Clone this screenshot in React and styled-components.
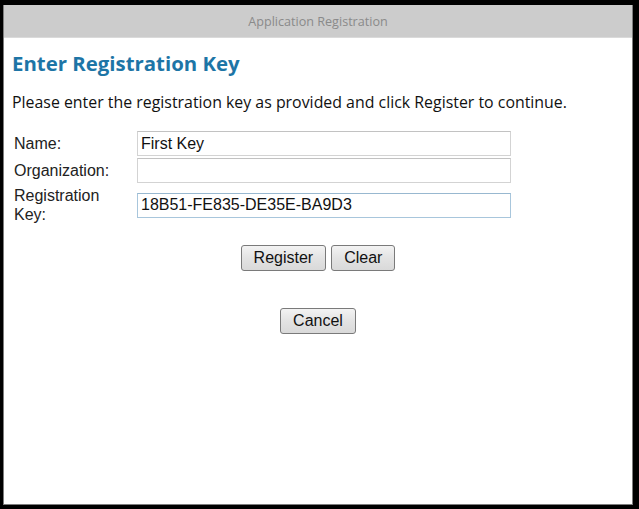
import React from "react";
import styled, { createGlobalStyle } from "styled-components";

const GlobalStyle = createGlobalStyle`
  html, body {
    margin: 0;
    padding: 0;
    background: #000;
  }
`;

const Screen = styled.div`
  width: 639px;
  height: 509px;
  box-sizing: border-box;
  padding: 5px 6px 4px 3px;
  background: #000;
`;

const Window = styled.div`
  width: 630px;
  height: 500px;
  box-sizing: border-box;
  border: 1px solid #7d7d7d;
  border-top: none;
  background: #fff;
  display: flex;
  flex-direction: column;
`;

const TitleBar = styled.div`
  height: 32px;
  background: #cccccc;
  border-bottom: 1px solid #dadada;
  display: flex;
  align-items: center;
  justify-content: center;
  font-family: "Open Sans", sans-serif;
  font-size: 12.6px;
  color: #8a8a8a;
`;

const Content = styled.div`
  padding: 11px 8px 0 8px;
`;

const Heading = styled.h1`
  margin: 0;
  font-family: "Open Sans", sans-serif;
  font-weight: 700;
  font-size: 20.4px;
  color: #1d75a6;
`;

const Intro = styled.p`
  margin: 14px 0 18px;
  font-family: "Open Sans", sans-serif;
  font-size: 15.9px;
  color: #111;
`;

const Form = styled.div`
  display: grid;
  grid-template-columns: 123px 374px;
  row-gap: 2px;
  align-items: center;
  margin-left: 2px;
  font-family: "Liberation Sans", Arial, sans-serif;
  font-size: 16px;
  color: #222;
`;

const Label = styled.label`
  max-width: 112px;
  padding: 1px 0;
  line-height: 19px;
`;

const Field = styled.input`
  box-sizing: border-box;
  width: 374px;
  height: 25px;
  padding: 0 3px;
  border: 1px solid ${(p) => (p.$focused ? "#a8c6dc" : "#d3d3d3")};
  border-top-color: ${(p) => (p.$focused ? "#98b8d0" : "#c2c2c2")};
  font-family: "Liberation Sans", Arial, sans-serif;
  font-size: 16px;
  color: #111;
  outline: none;
  background: #fff;
`;

const ButtonRow = styled.div`
  display: flex;
  justify-content: center;
  gap: 5px;
  margin-top: ${(p) => p.$top}px;
`;

const Button = styled.button`
  box-sizing: border-box;
  height: 26px;
  padding: 0 12px;
  border: 1px solid #7a7a7a;
  border-radius: 3px;
  background: linear-gradient(#f3f3f3, #e3e3e3 50%, #d9d9d9);
  font-family: "Liberation Sans", Arial, sans-serif;
  font-size: 16px;
  color: #111;
`;

export default function App() {
  return (
    <>
      <GlobalStyle />
      <Screen>
        <Window>
          <TitleBar>Application Registration</TitleBar>
          <Content>
            <Heading>Enter Registration Key</Heading>
            <Intro>
              Please enter the registration key as provided and click Register
              to continue.
            </Intro>
            <Form>
              <Label>Name:</Label>
              <Field defaultValue="First Key" />
              <Label>Organization:</Label>
              <Field defaultValue="" />
              <Label>Registration Key:</Label>
              <Field $focused defaultValue="18B51-FE835-DE35E-BA9D3" />
            </Form>
            <ButtonRow $top={20}>
              <Button>Register</Button>
              <Button>Clear</Button>
            </ButtonRow>
            <ButtonRow $top={37}>
              <Button>Cancel</Button>
            </ButtonRow>
          </Content>
        </Window>
      </Screen>
    </>
  );
}
